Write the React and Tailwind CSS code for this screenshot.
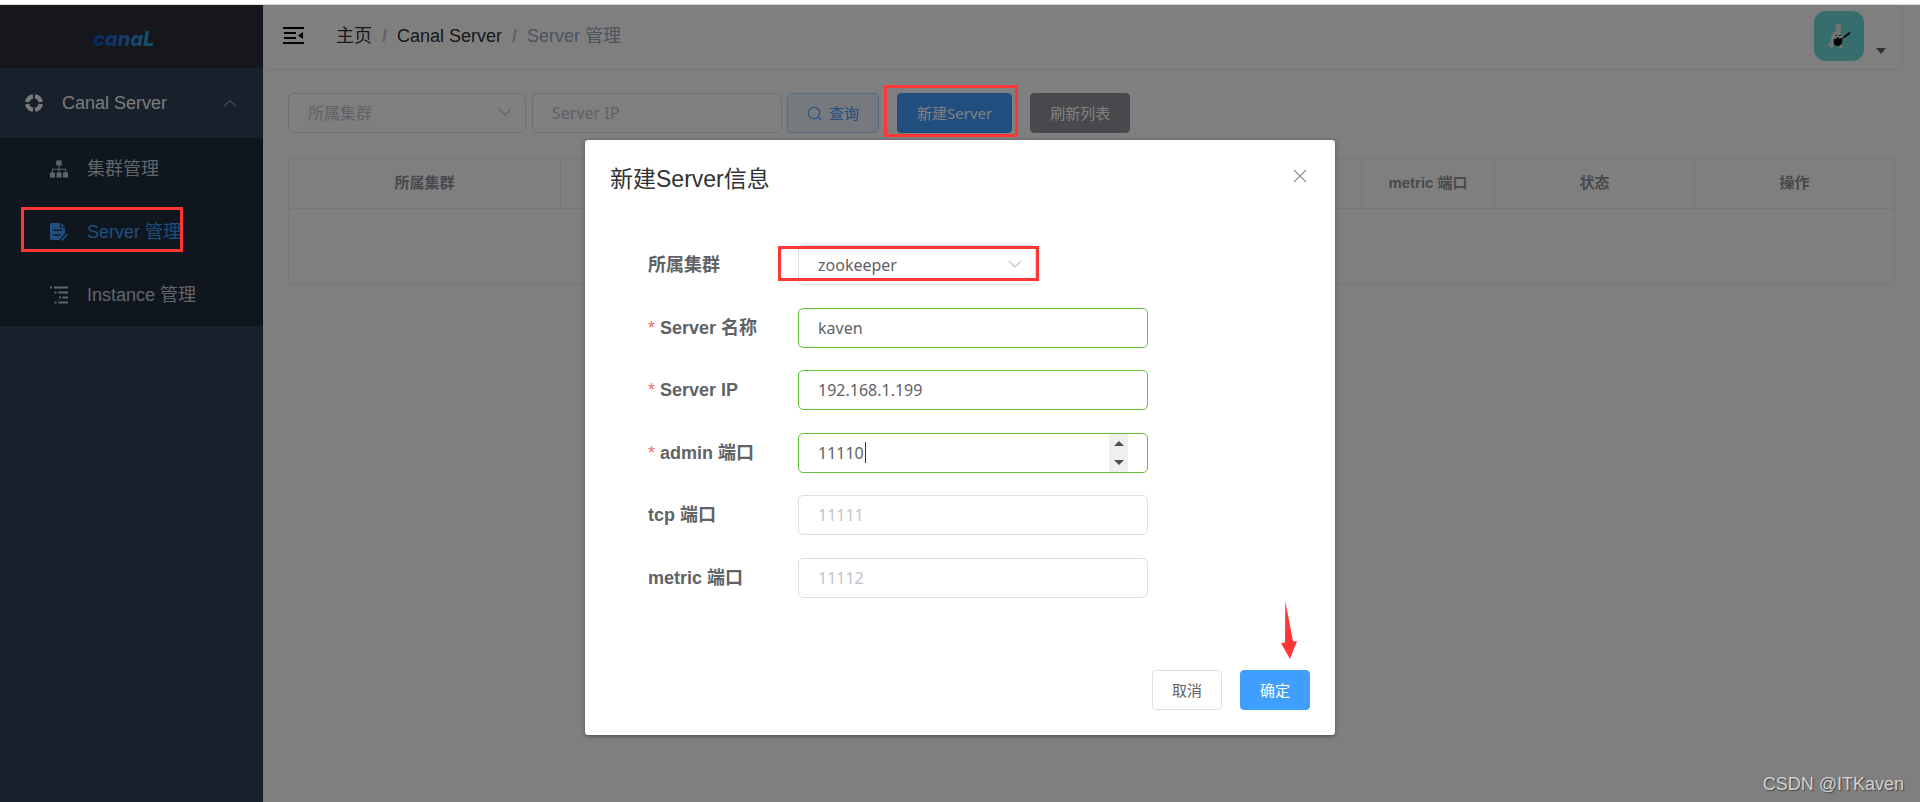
import React, { useState } from "react";

const columns = [
  { id: "cluster", title: "所属集群", width: "w-[272px]" },
  { id: "name", width: "" },
  { id: "ip", width: "" },
  { id: "admin", width: "w-[133px]" },
  { id: "tcp", width: "w-[133px]" },
  { id: "metric", title: "metric 端口", width: "w-[133px]" },
  { id: "status", title: "状态", width: "w-[200px]" },
  { id: "action", title: "操作", width: "w-[200px]" },
];

const fields = [
  { id: "name", label: "Server 名称", required: true, value: "kaven" },
  { id: "ip", label: "Server IP", required: true, value: "192.168.1.199" },
  { id: "adminPort", label: "admin 端口", required: true, value: "11110", number: true },
  { id: "tcpPort", label: "tcp 端口", placeholder: "11111" },
  { id: "metricPort", label: "metric 端口", placeholder: "11112" },
];

function Chevron({ className, up }) {
  return (
    <svg className={className} width="14" height="8" viewBox="0 0 14 8" fill="none" stroke="currentColor" strokeWidth="1.2">
      <path d={up ? "M1.5 7 7 1.5 12.5 7" : "M1 1 7 7 13 1"} />
    </svg>
  );
}

function RingIcon() {
  return (
    <svg width="18" height="18" viewBox="0 0 18 18" fill="none" stroke="currentColor" strokeWidth="4.4">
      <path d="M10 2.3A6.8 6.8 0 0 1 15.700 8M15.700 10A6.800 6.800 0 0 1 10 15.700M8 15.700A6.800 6.800 0 0 1 2.300 10M2.300 8A6.800 6.800 0 0 1 8 2.300" />
    </svg>
  );
}

function TreeIcon() {
  return (
    <svg width="18" height="18" viewBox="0 0 18 18" fill="currentColor">
      <path d="M6.3 0.5h5.4v5H6.3zM0 12.5h5v5H0zM6.6 12.5h5v5h-5zM13 12.5h5v5h-5z" />
      <path d="M8.6 5.5h1v3.2h6.6v3.8h-1V9.7H9.6v2.8h-1V9.7H3v2.8H2V8.7h6.6z" />
    </svg>
  );
}

function FormIcon() {
  return (
    <svg width="18" height="18" viewBox="0 0 18 18" fill="currentColor">
      <path
        fillRule="evenodd"
        d="M1.8 0H10v3.2c0 1 .6 1.6 1.6 1.6H15v5.4L9.4 17H1.8C.7 17 0 16.3 0 15.3V1.7C0 .7.7 0 1.8 0zM3 6.600v1.500h9V6.600zM3 11.200v1.500h7.600v-1.500z"
      />
      <path d="M11.3 0 15 3.7h-2.8c-.6 0-.9-.3-.9-.9z" />
      <path d="m16.7 10.4 1.3 1-5.2 6.2-1.900.4.5-1.800z" />
    </svg>
  );
}

function TreeListIcon() {
  return (
    <svg width="18" height="18" viewBox="0 0 18 18" fill="currentColor">
      <path d="M0 .5h2v2H0zM4 .5h14v2H4zM4.5 5.5h2v2h-2zM8.5 5.5H18v2H8.5zM9 10.5h2v2H9zM12.5 10.5H18v2h-5.5zM4.5 15.5h2v2h-2zM8.5 15.5H18v2H8.5z" />
    </svg>
  );
}

function Sidebar() {
  return (
    <aside className="w-[263px] shrink-0 bg-[#304156] text-lg">
      <a href="#home" className="flex h-[63px] items-center justify-center bg-[#2b2f3a] pr-4 pt-1">
        <span className="bg-linear-to-r from-[#0050c8] via-[#2f78dc] to-[#2ab4c8] bg-clip-text px-1 font-[Inter,sans-serif] text-xl font-extrabold italic text-transparent">
          canaL
        </span>
      </a>

      <button type="button" className="flex h-[70px] w-full items-center pl-[25px] pr-[26px] text-[#f4f4f5]">
        <RingIcon />
        <span className="ml-[19px]">Canal Server</span>
        <Chevron up className="ml-auto text-[#909399]" />
      </button>

      <nav className="flex flex-col gap-px bg-[#1f2d3d] text-[#bfcbd9]">
        <a href="#cluster" className="flex h-[62px] items-center gap-[19px] pl-[50px]">
          <TreeIcon />
          集群管理
        </a>
        <a href="#server" className="relative flex h-[62px] items-center gap-[19px] pl-[50px] text-[#409eff]">
          <FormIcon />
          Server 管理
          <span className="absolute left-[21px] top-1.5 z-20 h-[45px] w-[162px] border-3 border-[#ff3636]" />
        </a>
        <a href="#instance" className="flex h-[62px] items-center gap-[19px] pl-[50px]">
          <TreeListIcon />
          Instance 管理
        </a>
      </nav>
    </aside>
  );
}

function Navbar() {
  return (
    <header className="mr-[18px] flex h-[63px] items-center pb-px pl-5 shadow-[0_1px_4px_rgba(0,21,41,0.08)]">
      <button type="button" aria-label="menu">
        <svg width="21" height="18" viewBox="0 0 21 18" fill="currentColor">
          <path d="M0 0h21v2H0zM1 5h12v2H1zM1 10h12v2H1zM0 15h21v2H0zM15 8.500 20 5v7z" />
        </svg>
      </button>

      <nav className="ml-8 flex items-center gap-2.5 text-lg">
        <a href="#home" className="text-[#303133]">主页</a>
        <span className="font-bold text-[#c0c4cc]">/</span>
        <a href="#canal" className="text-[#303133]">Canal Server</a>
        <span className="font-bold text-[#c0c4cc]">/</span>
        <span className="text-[#97a8be]">Server 管理</span>
      </nav>

      <button type="button" aria-label="user" className="ml-auto flex items-end gap-3 pr-4">
        <svg width="50" height="50" viewBox="0 0 50 50" className="rounded-xl bg-[#6bdcd8]">
          <path
            fill="#e6e6e6"
            d="M21.500 13c1-1.500 2.500-.5 2.700.5.800-1.300 2.500-.8 2.800.8.500 2.700.3 5-.8 7.200 1.200 1 2 2.300 2 4 1.200.5 1.800 2 .8 3.200l-1.500 3.500.8 4.300c-.5 1.500-2.300 1.300-2.600 0l-1-3.300-5-.2c-.5 1.800-.8 4.200-2.200 4.300-1.400.1-1.500-1.300-1-2.300-1.800.3-3.200-.7-2.600-2 .5-1 2-.8 2.600-.4.200-3.800.4-8.100 3-11 2-1 2.800-2.600 2.400-4.600z"
          />
          <path fill="#0a0a0a" d="M20.500 27.500c2 .8 2.800-.8 3.700-2l1 2.300c1.200-.8 2.500-1 3.500-.5l-.4 4c-1 4-5.500 4.700-7.500 2.700-1.800-1.700-1.500-4.800-.3-6.500zM28.500 26.500l4-3.200 2-1.800 2.300-.5-1.600 2.700-2.200 1.300-3.500 2.500z" />
          <path stroke="#222" d="M21.500 24.500h1.500M25 24.500h2" />
        </svg>
        <svg width="10" height="6" viewBox="0 0 10 6" className="mb-[7px]" fill="#606266">
          <path d="M0 0h10L5 6z" />
        </svg>
      </button>
    </header>
  );
}

function Filters() {
  return (
    <div className="flex items-center font-['Noto_Sans','Noto_Sans_CJK_SC',sans-serif]">
      <div className="relative mr-1.5 w-[238px] text-[#c0c4cc]">
        <select aria-label="所属集群" className="h-10 w-full appearance-none rounded-[5px] border border-[#dcdfe6] bg-white px-[19px] text-base">
          <option>所属集群</option>
        </select>
        <Chevron className="pointer-events-none absolute right-3.5 top-[15px]" />
      </div>
      <input
        aria-label="Server IP"
        placeholder="Server IP"
        className="mr-[5px] h-10 w-[250px] rounded-[5px] border border-[#dcdfe6] bg-white px-[19px] text-base placeholder:text-[#c0c4cc]"
      />
      <button type="button" className="flex h-10 items-center gap-[7px] rounded-sm border border-[#b3d8ff] bg-[#ecf5ff] px-[19px] text-[15px] text-[#409eff]">
        <svg width="15" height="15" viewBox="0 0 15 15" fill="none" stroke="currentColor" strokeWidth="1.1">
          <circle cx="7" cy="7" r="5.8" />
          <path d="m11.2 11.2 3 3" />
        </svg>
        查询
      </button>
      <div className="relative mx-[18px]">
        <button type="button" className="h-10 rounded-sm border border-[#409eff] bg-[#409eff] px-[19px] text-[15px] text-white">
          新建Server
        </button>
        <span className="absolute -bottom-1 -left-[13px] -right-1.5 -top-2 z-20 border-3 border-[#ff3636]" />
      </div>
      <button type="button" className="h-10 rounded-sm border border-[#909399] bg-[#909399] px-[19px] text-[15px] text-white">
        刷新列表
      </button>
    </div>
  );
}

function ServerTable() {
  return (
    <table className="mt-[25px] w-full table-fixed border-collapse text-[15px]">
      <thead>
        <tr className="h-[50px] text-[#909399]">
          {columns.map((col) => (
            <th key={col.id} className={`border border-[#ebeef5] ${col.width}`}>
              {col.title}
            </th>
          ))}
        </tr>
      </thead>
      <tbody>
        <tr className="h-[75px]">
          <td colSpan={columns.length} className="border border-[#ebeef5]" />
        </tr>
      </tbody>
    </table>
  );
}

function Field({ field }) {
  const border = field.value ? "border-[#67c23a]" : "border-[#dcdfe6]";
  const [value, setValue] = useState(field.value || "");

  return (
    <div className="flex items-center">
      <label htmlFor={field.id} className="w-[150px] font-bold">
        {field.required && <span className="mr-[5px] font-normal text-[#f56c6c]">*</span>}
        {field.label}
      </label>
      <div className="relative w-[350px] font-['Noto_Sans','Noto_Sans_CJK_SC',sans-serif]">
        <input
          id={field.id}
          value={value}
          placeholder={field.placeholder}
          inputMode={field.number ? "numeric" : "text"}
          onChange={(e) => setValue(e.target.value)}
          className={`h-10 w-full rounded-[5px] border bg-white px-[19px] text-base placeholder:text-[#c0c4cc] ${border}`}
        />
        {field.number && (
          <>
            <span className="absolute left-[67px] top-[9px] h-[21px] w-px bg-[#303133]" />
            <div className="absolute right-5 top-px flex h-[38px] w-[19px] flex-col bg-[#efefef] text-[#505050]">
              <button type="button" aria-label="+" className="flex flex-1 items-center justify-center" onClick={() => setValue(String(Number(value) + 1))}>
                <svg width="10" height="5" viewBox="0 0 10 5" fill="currentColor"><path d="M0 5h10L5 0z" /></svg>
              </button>
              <button type="button" aria-label="-" className="flex flex-1 items-center justify-center" onClick={() => setValue(String(Number(value) - 1))}>
                <svg width="10" height="5" viewBox="0 0 10 5" fill="currentColor"><path d="M0 0h10L5 5z" /></svg>
              </button>
            </div>
          </>
        )}
      </div>
    </div>
  );
}

function ServerDialog() {
  return (
    <div role="dialog" aria-label="新建Server信息" className="w-[750px] rounded-[3px] bg-white p-[25px] text-[#606266] shadow-[0_1px_4px_rgba(0,0,0,0.4)]">
      <div className="flex h-7 items-center justify-between">
        <h2 className="text-[23px] text-[#303133]">新建Server信息</h2>
        <button type="button" aria-label="close" className="mr-[3px] mt-1 self-start text-[#909399]">
          <svg width="14" height="14" viewBox="0 0 14 14" fill="none" stroke="currentColor" strokeWidth="1.2">
            <path d="m1 1 12 12M13 1 1 13" />
          </svg>
        </button>
      </div>

      <form className="ml-[38px] mt-[52px] flex min-h-[353px] flex-col justify-between text-lg">
        <div className="flex items-center">
          <label htmlFor="cluster" className="w-[150px] font-bold">所属集群</label>
          <div className="relative w-[238px] font-['Noto_Sans','Noto_Sans_CJK_SC',sans-serif]">
            <select id="cluster" className="h-10 w-full appearance-none rounded-[5px] border border-[#dcdfe6] bg-white px-[19px] text-base">
              <option>zookeeper</option>
            </select>
            <Chevron className="pointer-events-none absolute right-3.5 top-[15px] text-[#c0c4cc]" />
            <span className="pointer-events-none absolute -left-5 -right-[3px] top-px h-[35px] border-3 border-[#ff3636]" />
          </div>
        </div>
        {fields.map((field) => (
          <Field key={field.id} field={field} />
        ))}
      </form>

      <div className="mt-[72px] flex justify-end gap-[18px] font-['Noto_Sans','Noto_Sans_CJK_SC',sans-serif] text-[15px]">
        <button type="button" className="h-10 rounded-sm border border-[#dcdfe6] px-[19px]">取消</button>
        <div className="relative">
          <button type="button" className="h-10 rounded-sm border border-[#409eff] bg-[#409eff] px-[19px] text-white">确定</button>
          <svg width="16" height="58" viewBox="0 0 16 58" className="absolute bottom-[51px] left-[41px]" fill="#ff3636">
            <path d="M4.3 0 12 40.5 16 40 9 58 0 42l4-.5z" />
          </svg>
        </div>
      </div>
    </div>
  );
}

function App() {
  return (
    <div className="flex min-h-screen flex-col bg-white font-['Liberation_Sans','Noto_Sans_CJK_SC',sans-serif]">
      <div className="h-[5px] border-b border-[#d9d9d9]" />

      <div className="relative flex flex-1">
        <Sidebar />
        <div className="min-w-0 flex-1">
          <Navbar />
          <main className="p-[25px]">
            <Filters />
            <ServerTable />
          </main>
        </div>

        {/* Mask + dialog */}
        <div className="absolute inset-0 z-10 flex items-start justify-center bg-black/50 pt-[135px]">
          <ServerDialog />
        </div>

        {/* Watermark */}
        <p className="absolute bottom-1 right-4 z-20 text-lg text-[#d0d0d0] [text-shadow:1px_1px_1px_#444]">
          CSDN @ITKaven
        </p>
      </div>
    </div>
  );
}

export default App;
